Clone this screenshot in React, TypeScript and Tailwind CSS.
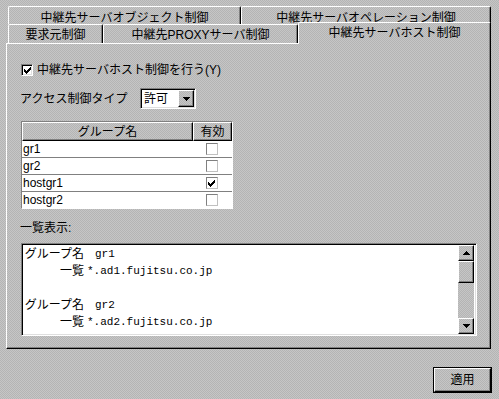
import React from 'react';

// Win95-style property sheet: "中継先サーバホスト制御" tab

const FONT = "font-['Liberation_Sans','Noto_Sans_CJK_JP',sans-serif]";
const MONO = "font-['Liberation_Mono','Noto_Sans_CJK_JP',monospace]";
const DITHER =
  'bg-[conic-gradient(#c6c6c6_25%,#b4b4b4_0_50%,#c6c6c6_0_75%,#b4b4b4_0)] bg-[length:2px_2px]';
const RAISED =
  'border border-t-white border-l-white border-r-black border-b-black shadow-[inset_-1px_-1px_#808080]';
const SUNKEN =
  'border border-t-[#808080] border-l-[#808080] border-r-white border-b-white shadow-[inset_1px_1px_#000,inset_-1px_-1px_#dfdfdf]';

const CHECK_PIXELS: [number, number][] = [
  [6, 0],
  [5, 1], [6, 1],
  [0, 2], [4, 2], [5, 2], [6, 2],
  [0, 3], [1, 3], [3, 3], [4, 3], [5, 3],
  [0, 4], [1, 4], [2, 4], [3, 4], [4, 4],
  [1, 5], [2, 5], [3, 5],
  [2, 6],
];

function CheckMark() {
  return (
    <svg width="7" height="7" viewBox="0 0 7 7" shapeRendering="crispEdges">
      {CHECK_PIXELS.map(([x, y]) => (
        <rect key={`${x}-${y}`} x={x} y={y} width="1" height="1" fill="#000" />
      ))}
    </svg>
  );
}

function Checkbox({ checked }: { checked?: boolean }) {
  return (
    <div className={`flex h-[12px] w-[12px] items-center justify-center bg-white ${SUNKEN}`}>
      {checked && <CheckMark />}
    </div>
  );
}

function FlatCheckbox({ checked }: { checked?: boolean }) {
  return (
    <div className="flex h-[12px] w-[12px] items-center justify-center border border-t-[#808080] border-l-[#808080] border-r-[#c0c0c0] border-b-[#c0c0c0] bg-white">
      {checked && <CheckMark />}
    </div>
  );
}

function Tab({ label, className }: { label: string; className?: string }) {
  return (
    <div
      className={`flex justify-center rounded-t-[2px] border-t border-l border-r border-t-white border-l-white border-r-black pt-[3px] text-[12px] leading-[14px] text-black shadow-[inset_-1px_0_#808080] ${className ?? ''}`}
    >
      {label}
    </div>
  );
}

function Arrow({ up }: { up?: boolean }) {
  return (
    <svg width="7" height="4" viewBox="0 0 7 4" shapeRendering="crispEdges">
      <polygon points={up ? '3.5,0 7,4 0,4' : '0,0 7,0 3.5,4'} fill="#000" />
    </svg>
  );
}

const groups = [
  { name: 'gr1', enabled: false },
  { name: 'gr2', enabled: false },
  { name: 'hostgr1', enabled: true },
  { name: 'hostgr2', enabled: false },
];

const listLines: { label: string; value: string; gap: string }[] = [
  { label: 'グループ名', value: 'gr1', gap: 'ml-[11px]' },
  { label: '一覧', value: '*.ad1.fujitsu.co.jp', gap: 'ml-[3px]' },
  { label: '', value: '', gap: '' },
  { label: 'グループ名', value: 'gr2', gap: 'ml-[11px]' },
  { label: '一覧', value: '*.ad2.fujitsu.co.jp', gap: 'ml-[3px]' },
];

export default function App() {
  return (
    <div className={`flex h-[399px] w-[499px] flex-col overflow-hidden pt-[6px] text-black ${DITHER} ${FONT}`}>
      {/* tab rows */}
      <div className="ml-[8px] flex h-[18px]">
        <Tab label="中継先サーバオブジェクト制御" className="w-[233px] pt-[4px]" />
        <Tab label="中継先サーバオペレーション制御" className="w-[250px] pt-[4px]" />
      </div>
      <div className="ml-[8px] -mt-[2px] flex items-end">
        <Tab label="要求元制御" className={`h-[19px] w-[95px] ${DITHER}`} />
        <Tab label="中継先PROXYサーバ制御" className={`h-[19px] w-[195px] ${DITHER}`} />
        <Tab label="中継先サーバホスト制御" className={`relative z-10 -mb-[1px] h-[22px] w-[193px] ${DITHER}`} />
      </div>

      {/* panel */}
      <div className={`ml-[6px] flex h-[306px] w-[485px] flex-col pl-[13px] text-[12px] ${RAISED}`}>
        <div className="mt-[20px] flex h-[12px] items-center">
          <div className="ml-[1px]">
            <Checkbox checked />
          </div>
          <span className="ml-[4px] leading-[14px]">中継先サーバホスト制御を行う(Y)</span>
        </div>

        <div className="mt-[12px] flex h-[21px] items-center">
          <span className="w-[120px] leading-[14px]">アクセス制御タイプ</span>
          <div className={`flex h-[21px] w-[56px] items-stretch bg-white p-[1px] ${SUNKEN}`}>
            <span className="flex flex-1 items-center pl-[2px] leading-[14px]">許可</span>
            <div className={`flex w-[16px] items-center justify-center ${DITHER} ${RAISED}`}>
              <Arrow />
            </div>
          </div>
        </div>

        {/* group table */}
        <div className="ml-[1px] mt-[12px] flex w-[212px] flex-col border border-t-[#808080] border-l-[#808080] border-r-white border-b-white">
          <div className="flex h-[19px]">
            <div className={`flex w-[171px] items-center justify-center leading-[14px] ${RAISED}`}>グループ名</div>
            <div className={`flex flex-1 items-center justify-center leading-[14px] ${RAISED}`}>有効</div>
          </div>
          {groups.map((g, i) => (
            <div
              key={g.name}
              className={`flex bg-white ${i < groups.length - 1 ? 'h-[17px] border-b border-b-[#808080]' : 'h-[16px]'}`}
            >
              <div className="flex w-[171px] items-center pl-[1px] leading-[14px]">{g.name}</div>
              <div className="flex flex-1 items-center justify-center pr-[2px]">
                <FlatCheckbox checked={g.enabled} />
              </div>
            </div>
          ))}
        </div>

        <div className="mt-[12px] leading-[14px]">一覧表示:</div>

        {/* list view */}
        <div className={`ml-[1px] mt-[8px] flex h-[93px] w-[456px] bg-white p-[1px] ${SUNKEN}`}>
          <div className="flex-1 pl-[1px]">
            {listLines.map((l, i) => (
              <div key={i} className="flex h-[17px] items-center">
                <span className="w-[60px] text-right leading-[14px]">{l.label}</span>
                <span className={`${l.gap} text-[11px] leading-[14px] ${MONO}`}>{l.value}</span>
              </div>
            ))}
          </div>
          <div className="mr-[1px] flex w-[16px] flex-col">
            <div className={`flex h-[16px] items-center justify-center ${DITHER} ${RAISED}`}>
              <Arrow up />
            </div>
            <div className={`h-[22px] ${DITHER} ${RAISED}`} />
            <div className={`flex-1 ${DITHER}`} />
            <div className={`flex h-[16px] items-center justify-center ${DITHER} ${RAISED}`}>
              <Arrow />
            </div>
          </div>
        </div>
      </div>

      {/* apply */}
      <div className="mr-[7px] mt-[18px] self-end border border-black">
        <div className={`flex h-[24px] w-[57px] items-center justify-center text-[12px] leading-[14px] ${RAISED}`}>
          適用
        </div>
      </div>
    </div>
  );
}
